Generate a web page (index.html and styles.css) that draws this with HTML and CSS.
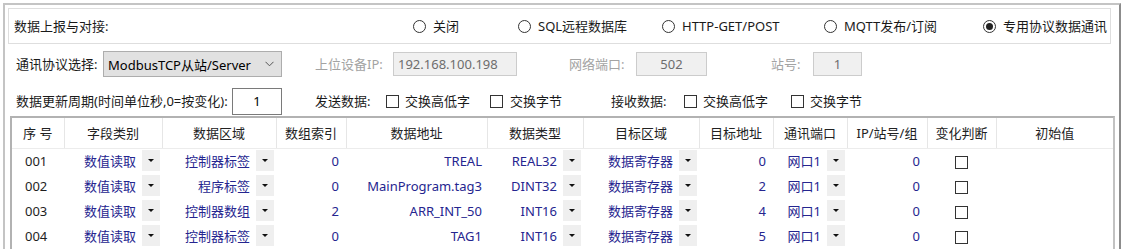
FILE: index.html
```html
<!DOCTYPE html>
<html lang="zh-CN">
<head>
<meta charset="utf-8">
<title>数据上报与对接</title>
<link rel="stylesheet" href="styles.css">
</head>
<body>
<div class="panel">
  <div class="report-box">
    <span class="label">数据上报与对接:</span>
    <label class="radio"><span class="radio-dot"></span>关闭</label>
    <label class="radio"><span class="radio-dot"></span>SQL远程数据库</label>
    <label class="radio"><span class="radio-dot"></span>HTTP-GET/POST</label>
    <label class="radio"><span class="radio-dot"></span>MQTT发布/订阅</label>
    <label class="radio"><span class="radio-dot checked"></span>专用协议数据通讯</label>
  </div>

  <div class="row row-proto">
    <span class="label w-proto">通讯协议选择:</span>
    <div class="select"><span>ModbusTCP从站/Server</span><svg class="chev" width="9" height="6" viewBox="0 0 9 6"><path d="M0.5 0.8 L4.5 4.8 L8.5 0.8" fill="none" stroke="#555" stroke-width="1"/></svg></div>
    <span class="label dim w-ip">上位设备IP:</span>
    <div class="field disabled w-ipbox left">192.168.100.198</div>
    <span class="label dim w-port">网络端口:</span>
    <div class="field disabled w-portbox">502</div>
    <span class="label dim w-station">站号:</span>
    <div class="field disabled w-stationbox">1</div>
  </div>

  <div class="row row-period">
    <span class="label w-period">数据更新周期(时间单位秒,0=按变化):</span>
    <div class="field w-periodbox">1</div>
    <span class="label w-send">发送数据:</span>
    <label class="check w-c1"><span class="box"></span>交换高低字</label>
    <label class="check w-c2"><span class="box"></span>交换字节</label>
    <span class="label w-recv">接收数据:</span>
    <label class="check w-c3"><span class="box"></span>交换高低字</label>
    <label class="check"><span class="box"></span>交换字节</label>
  </div>

  <div class="grid-wrap">
    <table class="grid">
      <colgroup>
        <col class="c52"><col class="c98"><col class="c114"><col class="c70"><col class="c141"><col class="c96"><col class="c116"><col class="c74"><col class="c74"><col class="c80"><col class="c69"><col class="c117">
      </colgroup>
      <thead>
        <tr>
          <th>序 号</th><th>字段类别</th><th>数据区域</th><th>数组索引</th><th>数据地址</th><th>数据类型</th><th>目标区域</th><th>目标地址</th><th>通讯端口</th><th>IP/站号/组</th><th>变化判断</th><th>初始值</th>
        </tr>
      </thead>
      <tbody>
        <tr>
          <td class="idx">001</td>
          <td><div class="dd"><span>数值读取</span><i class="btn"></i></div></td>
          <td><div class="dd"><span>控制器标签</span><i class="btn"></i></div></td>
          <td class="num">0</td>
          <td class="num addr">TREAL</td>
          <td><div class="dd"><span>REAL32</span><i class="btn"></i></div></td>
          <td><div class="dd"><span>数据寄存器</span><i class="btn"></i></div></td>
          <td class="num">0</td>
          <td><div class="dd"><span>网口1</span><i class="btn"></i></div></td>
          <td class="num">0</td>
          <td class="chk"><span class="box"></span></td>
          <td></td>
        </tr>
        <tr>
          <td class="idx">002</td>
          <td><div class="dd"><span>数值读取</span><i class="btn"></i></div></td>
          <td><div class="dd"><span>程序标签</span><i class="btn"></i></div></td>
          <td class="num">0</td>
          <td class="num addr">MainProgram.tag3</td>
          <td><div class="dd"><span>DINT32</span><i class="btn"></i></div></td>
          <td><div class="dd"><span>数据寄存器</span><i class="btn"></i></div></td>
          <td class="num">2</td>
          <td><div class="dd"><span>网口1</span><i class="btn"></i></div></td>
          <td class="num">0</td>
          <td class="chk"><span class="box"></span></td>
          <td></td>
        </tr>
        <tr>
          <td class="idx">003</td>
          <td><div class="dd"><span>数值读取</span><i class="btn"></i></div></td>
          <td><div class="dd"><span>控制器数组</span><i class="btn"></i></div></td>
          <td class="num">2</td>
          <td class="num addr">ARR_INT_50</td>
          <td><div class="dd"><span>INT16</span><i class="btn"></i></div></td>
          <td><div class="dd"><span>数据寄存器</span><i class="btn"></i></div></td>
          <td class="num">4</td>
          <td><div class="dd"><span>网口1</span><i class="btn"></i></div></td>
          <td class="num">0</td>
          <td class="chk"><span class="box"></span></td>
          <td></td>
        </tr>
        <tr>
          <td class="idx">004</td>
          <td><div class="dd"><span>数值读取</span><i class="btn"></i></div></td>
          <td><div class="dd"><span>控制器标签</span><i class="btn"></i></div></td>
          <td class="num">0</td>
          <td class="num addr">TAG1</td>
          <td><div class="dd"><span>INT16</span><i class="btn"></i></div></td>
          <td><div class="dd"><span>数据寄存器</span><i class="btn"></i></div></td>
          <td class="num">5</td>
          <td><div class="dd"><span>网口1</span><i class="btn"></i></div></td>
          <td class="num">0</td>
          <td class="chk"><span class="box"></span></td>
          <td></td>
        </tr>
      </tbody>
    </table>
  </div>
</div>
</body>
</html>
```

FILE: styles.css
```css
* { box-sizing: border-box; }
html, body { margin: 0; padding: 0; background: #ffffff; }
body {
  font-family: "Noto Sans", "Noto Sans CJK SC", sans-serif;
  font-size: 13px;
  color: #1a1a1a;
  width: 1125px;
  height: 249px;
  overflow: hidden;
}
.panel {
  margin: 3px 4px 0 3px;
  height: 246px;
  border-top: 2px solid #c4c4c4;
  border-left: 2px solid #c4c4c4;
  border-right: 2px solid #8c8c8c;
  overflow: hidden;
}
.label { white-space: nowrap; line-height: 18px; }
.dim { color: #a3a3a3; }

/* row 1 */
.report-box {
  margin: 3px 8px 0 3px;
  height: 36px;
  border: 1px solid #dedede;
  padding-left: 5px;
  display: grid;
  grid-template-columns: 399px 105px 144px 162px 159px 1fr;
  align-items: center;
}
.radio {
  display: flex;
  align-items: center;
  gap: 7px;
  white-space: nowrap;
  line-height: 18px;
}
.radio-dot {
  width: 13px;
  height: 13px;
  border: 1px solid #333;
  border-radius: 50%;
  background: #fff;
  display: flex;
  align-items: center;
  justify-content: center;
  flex: none;
}
.radio-dot.checked::after {
  content: "";
  width: 7px;
  height: 7px;
  border-radius: 50%;
  background: #222;
}

/* generic rows */
.row {
  display: flex;
  align-items: center;
  padding-left: 11px;
}
.row-proto { margin-top: 7px; height: 26px; }
.row-period { margin-top: 11px; height: 26px; }

.w-proto { width: 87px; }
.select {
  width: 179px;
  height: 26px;
  background: #e1e1e1;
  border: 1px solid #adadad;
  display: flex;
  align-items: center;
  justify-content: space-between;
  padding: 0 7px 0 4px;
  color: #000;
  white-space: nowrap;
}
.chev { flex: none; }
.w-ip { width: 78px; margin-left: 33px; }
.field {
  height: 24px;
  border: 1px solid #cccccc;
  background: #f0f0f0;
  color: #6d6d6d;
  display: flex;
  align-items: center;
  justify-content: center;
  white-space: nowrap;
}
.field.left { justify-content: flex-start; padding-left: 4px; }
.w-ipbox { width: 124px; }
.w-port { width: 67px; margin-left: 52px; }
.w-portbox { width: 71px; }
.w-station { width: 42px; margin-left: 64px; }
.w-stationbox { width: 49px; }

.w-period { width: 216px; }
.w-periodbox {
  width: 50px;
  height: 27px;
  background: #fff;
  border: 1px solid #7a7a7a;
  color: #000;
}
.w-send { width: 71px; margin-left: 33px; }
.check {
  display: flex;
  align-items: center;
  gap: 6px;
  white-space: nowrap;
  line-height: 18px;
}
.box {
  width: 13px;
  height: 13px;
  border: 1px solid #333;
  background: #fff;
  flex: none;
  display: inline-block;
}
.w-c1 { width: 104px; }
.w-c2 { width: 121px; gap: 7px; }
.w-recv { width: 73px; }
.w-c3 { width: 107px; }

/* grid */
.grid-wrap {
  margin: 2px 4px 0 5px;
  border-top: 2px solid #b2b2b2;
  border-left: 2px solid #b2b2b2;
  border-right: 2px solid #c2c2c2;
  height: 200px;
}
.grid {
  border-collapse: collapse;
  table-layout: fixed;
  width: 1101px;
}
.c52 { width: 52px; } .c98 { width: 98px; } .c114 { width: 114px; } .c70 { width: 70px; }
.c141 { width: 141px; } .c96 { width: 96px; } .c116 { width: 116px; } .c74 { width: 74px; }
.c80 { width: 80px; } .c69 { width: 69px; } .c117 { width: 117px; }
.grid th {
  height: 30px;
  padding: 0;
  font-weight: normal;
  color: #222;
  text-align: center;
  white-space: nowrap;
  border-right: 1px solid #e6e6e6;
  border-bottom: 1px solid #ececec;
}
.grid th:last-child { border-right: none; }
.grid td {
  height: 25px;
  padding: 0;
  color: #25258f;
  white-space: nowrap;
  vertical-align: middle;
}
.grid td.idx { color: #1e1e1e; padding-left: 13px; }
.grid td.num { text-align: right; padding-right: 7px; }
.grid td.addr { padding-right: 5px; }
.grid td.chk { text-align: center; }
.grid td.chk .box { vertical-align: middle; }
.dd {
  display: flex;
  align-items: center;
  justify-content: flex-end;
  gap: 6px;
  padding-right: 2px;
}
.btn {
  width: 18px;
  height: 21px;
  background: #efefef;
  display: flex;
  align-items: center;
  justify-content: center;
}
.btn::after {
  content: "";
  border-left: 3px solid transparent;
  border-right: 3px solid transparent;
  border-top: 3px solid #111;
}
```
